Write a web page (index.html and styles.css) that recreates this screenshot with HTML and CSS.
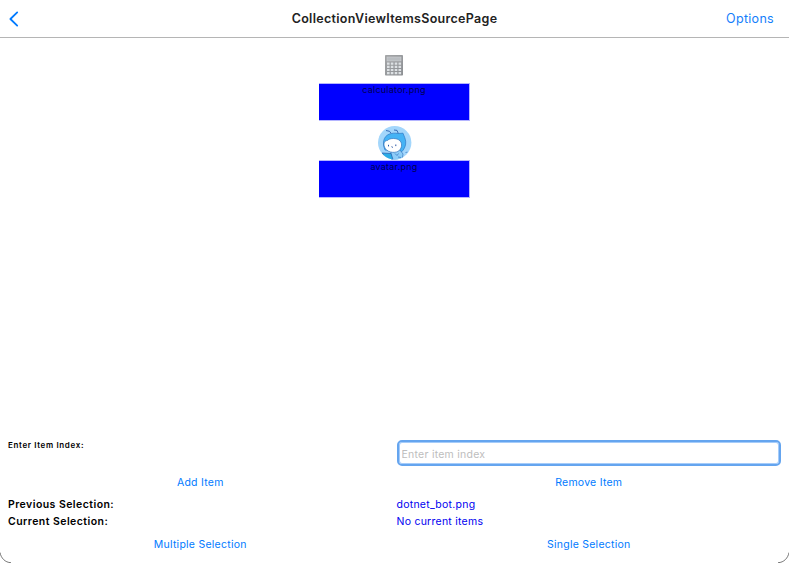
FILE: index.html
```html
<!DOCTYPE html>
<html lang="en">
<head>
<meta charset="utf-8">
<title>CollectionViewItemsSourcePage</title>
<link rel="stylesheet" href="styles.css">
</head>
<body>
<div class="window">
  <header class="navbar">
    <a class="back" aria-label="Back"><svg width="10" height="16" viewBox="0 0 10 16"><path d="M8.2 1.4 1.4 8l6.8 6.6"/></svg></a>
    <h1 class="title">CollectionViewItemsSourcePage</h1>
    <a class="options">Options</a>
  </header>
  <main class="collection">
    <div class="item">
      <svg class="calculator" width="18" height="21" viewBox="0 0 18 21">
        <defs><linearGradient id="case" x1="0" y1="0" x2="1" y2="1"><stop offset="0" stop-color="#a4a6a8"/><stop offset="1" stop-color="#8c8f93"/></linearGradient></defs>
        <rect x="0" y="0" width="18" height="20.5" rx=".8" fill="url(#case)"/>
        <rect x="2" y="2" width="14" height="4" fill="#b9bdc1" stroke="#d2d4d6" stroke-width=".5"/>
        <g fill="#dde1e4">
          <path d="M2 7.500h2.600v2.200H2zM5.800 7.500h2.600v2.200H5.800zM9.700 7.500h2.600v2.200H9.700zM13.500 7.500h2.600v2.200h-2.600z"/>
          <path d="M2 10.700h2.600v2.200H2zM5.800 10.700h2.600v2.200H5.800zM9.700 10.700h2.600v2.200H9.700zM13.500 10.700h2.600v2.200h-2.600z"/>
          <path d="M2 13.900h2.600v2.200H2zM5.800 13.900h2.600v2.200H5.800zM9.700 13.900h2.600v2.200H9.700zM13.500 13.900h2.600v2.200h-2.600z"/>
          <path d="M2 17h2.600v2.200H2zM5.800 17h2.600v2.200H5.800zM9.700 17h2.600v2.200H9.700zM13.500 17h2.600v2.200h-2.600z"/>
        </g>
      </svg>
      <div class="caption">calculator.png</div>
    </div>
    <div class="item">
      <svg class="avatar" width="34" height="34" viewBox="0 0 34 34">
        <defs><clipPath id="disc"><circle cx="16.700" cy="16.700" r="16.700"/></clipPath></defs>
        <g clip-path="url(#disc)">
          <rect width="34" height="34" fill="#a3d6fb"/>
          <path d="M7 24C4 17 5.500 10.500 11 8.200c3-1.200 6-1.300 9-.7l5-.3 1.700 4.300c2 5 1 10-2.700 14z" fill="#45b3f5" stroke="#2c78c4" stroke-width=".7"/>
          <path d="M8 4.500l3.500.8 1.500 1.900M16 4l3 .4 1.200 2.800" fill="none" stroke="#2b5fae" stroke-width=".9"/>
          <path d="M13 25l9-1 3 4-1 6H13z" fill="#8dcdf8" stroke="#3978bd" stroke-width=".7"/>
          <path d="M4 27l9 .5 2 6H8z" fill="#2bace6" stroke="#255cae" stroke-width=".7"/>
          <path d="M6.500 21c-1.400-4 .2-6.500 3-6.500 2-2.600 9.500-2.800 12.500.3 2.800 3.200 1.600 8.600-2 10.600-4 2-11.500 1-13.500-4.400z" fill="#fff" stroke="#3476bd" stroke-width=".7"/>
          <path d="M10.500 18.800v1.600M17.800 18.500v1.600M13.500 20.700l1.400.7" fill="none" stroke="#2855a4" stroke-width="1"/>
          <path d="M17 27.500l2 2 1.500-2M20 31l3 .5M27.500 26.500l2-.4" fill="none" stroke="#3475c1" stroke-width=".7"/>
        </g>
      </svg>
      <div class="caption">avatar.png</div>
    </div>
  </main>
  <section class="panel">
    <div class="row entry-row">
      <label class="index-label" for="index">Enter Item Index:</label>
      <input class="entry" id="index" type="text" placeholder="Enter item index">
    </div>
    <div class="row buttons">
      <a>Add Item</a>
      <a>Remove Item</a>
    </div>
    <div class="row status">
      <strong>Previous Selection:</strong><span>dotnet_bot.png</span>
    </div>
    <div class="row status">
      <strong>Current Selection:</strong><span>No current items</span>
    </div>
    <div class="row buttons">
      <a>Multiple Selection</a>
      <a>Single Selection</a>
    </div>
  </section>
  <svg class="corner left" width="12" height="12" viewBox="0 0 12 12"><path d="M0 1.500C1 7 5 11.500 11 11.700"/></svg>
  <svg class="corner right" width="12" height="12" viewBox="0 0 12 12"><path d="M12 1.500C11 7 7 11.500 1 11.700"/></svg>
</div>
</body>
</html>
```
FILE: styles.css
```css
* { box-sizing: border-box; }
body {
  margin: 0;
  height: 563px;
  overflow: hidden;
  font: 10.5px/17px Inter, "Liberation Sans", sans-serif;
  letter-spacing: 0.25px;
  color: #000;
  background: #fff;
}
.window {
  position: relative;
  height: 563px;
  display: flex;
  flex-direction: column;
  background: #fff;
}
.navbar {
  height: 38px;
  display: grid;
  grid-template-columns: 1fr auto 1fr;
  align-items: center;
  padding: 0 15px 0 9px;
  border-bottom: 1px solid #b5b5b5;
}
.back { display: flex; }
.back svg { fill: none; stroke: #007aff; stroke-width: 1.8; stroke-linecap: round; stroke-linejoin: round; }
.title { margin: 0 -6px 0 0; font-size: 12.5px; font-weight: 600; letter-spacing: 0.3px; color: #222; }
.options { justify-self: end; font-size: 12.5px; letter-spacing: 0.3px; color: #147efb; }
.collection {
  flex: 1;
  display: flex;
  flex-direction: column;
  align-items: center;
  padding-top: 17px;
}
.item { display: flex; flex-direction: column; align-items: center; width: 151px; }
.calculator { margin: 0 1px 7px 0; }
.avatar { margin-top: 5px; }
.caption {
  width: 151px;
  height: 38px;
  background: #00f;
  border: solid #b4b4ff;
  border-width: 1px 1px 1px 0;
  color: #000050;
  font-size: 9px;
  line-height: 11px;
  letter-spacing: 0.23px;
  text-align: center;
}
.panel { padding: 0 8px 10px; }
.row { display: grid; grid-template-columns: 1fr 1fr; column-gap: 4px; }
.entry-row { height: 26px; margin-bottom: 8px; }
.index-label { font-size: 8px; font-weight: 600; line-height: 11px; letter-spacing: 0.64px; }
.entry {
  width: 100%;
  height: 26px;
  padding: 2px 2px 0 3px;
  border: 2px solid #65a5ef;
  border-radius: 5px;
  box-shadow: inset 0 0 0 1px #a5ccfa;
  outline: none;
  background: #fff;
  font: inherit;
  letter-spacing: inherit;
}
.entry::placeholder { color: #bdbdbd; opacity: 1; }
.buttons { justify-items: center; color: #007aff; }
.buttons + .status { margin-top: 5px; }
.status strong { font-weight: 600; letter-spacing: 0.45px; }
.status span { color: #0000f0; }
.status + .buttons { margin-top: 6px; }
.corner { position: absolute; bottom: 0; fill: none; stroke: #555; stroke-width: 0.8; }
.left { left: 0; }
.right { right: 0; }
```
